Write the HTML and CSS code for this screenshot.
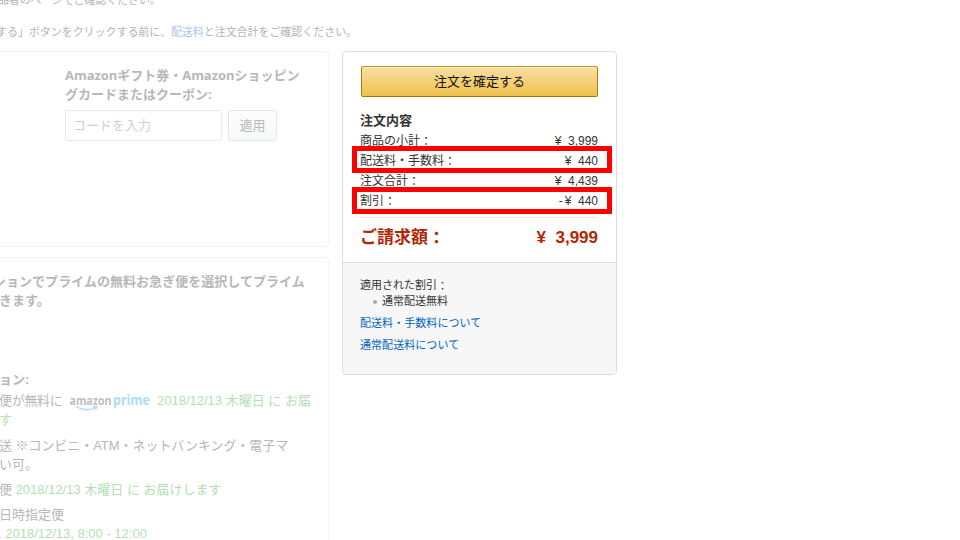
FILE: index.html
```html
<!DOCTYPE html>
<html lang="ja">
<head>
<meta charset="utf-8">
<title>注文の確定</title>
<link rel="stylesheet" href="styles.css">
</head>
<body>
<header class="notice">
  <p class="notice-seller">品者のページでご確認ください。</p>
  <p class="notice-confirm">する」ボタンをクリックする前に、<a>配送料</a>と注文合計をご確認ください。</p>
</header>
<main class="checkout">
  <div class="details">
    <section class="panel coupon">
      <h2><span class="coupon-first">Amazonギフト券・Amazonショッピン</span><br><span class="coupon-second">グカードまたはクーポン:</span></h2>
      <div class="coupon-form">
        <div class="code-input">コードを入力</div>
        <div class="apply">適用</div>
      </div>
    </section>
    <section class="panel shipping">
      <h2><span class="prime-first">ションでプライムの無料お急ぎ便を選択してプライム</span><br><span class="prime-second">きます。</span></h2>
      <h3>ョン:</h3>
      <div class="option prime-option">
        <span class="free">便が無料に</span>
        <svg class="logo" width="82" height="20" viewBox="0 0 82 20">
          <text class="logo-amazon" x="0.5" y="14" textLength="42" lengthAdjust="spacingAndGlyphs">amazon</text>
          <text class="logo-prime" x="44" y="14" textLength="37" lengthAdjust="spacingAndGlyphs">prime</text>
          <path d="M7 15.500 Q17 21.500 27 16.500 M23.500 16 L28 15.500 L26.500 19" fill="none" stroke="#a9e0f6" stroke-width="1.300"/>
        </svg>
        <span class="green delivery">2018/12/13 木曜日 に お届</span>
      </div>
      <div class="option green prime-end">す</div>
      <div class="option konbini">送 ※コンビニ・ATM・ネットバンキング・電子マ</div>
      <div class="option konbini-end">い可。</div>
      <div class="option express">便 <span class="green">2018/12/13 木曜日 に お届けします</span></div>
      <div class="option scheduled">日時指定便</div>
      <div class="option green slot">, 2018/12/13, 8:00 - 12:00</div>
    </section>
  </div>
  <aside class="summary">
    <div class="order">
      <div class="confirm">注文を確定する</div>
      <h2>注文内容</h2>
      <div class="row"><span>商品の小計<i>：</i></span><span class="price">¥&nbsp; 3,999</span></div>
      <div class="row marked"><span>配送料・手数料<i>：</i></span><span class="price">¥&nbsp; 440</span></div>
      <div class="row"><span>注文合計<i>：</i></span><span class="price">¥&nbsp; 4,439</span></div>
      <div class="row marked"><span>割引<i>：</i></span><span class="price"><b>-</b>¥&nbsp; 440</span></div>
      <div class="total"><span>ご請求額<i>：</i></span><span class="price">¥&nbsp; 3,999</span></div>
    </div>
    <div class="info">
      <p>適用された割引<i>：</i></p>
      <ul><li>通常配送無料</li></ul>
      <a>配送料・手数料について</a>
      <a>通常配送料について</a>
    </div>
  </aside>
</main>
</body>
</html>
```

FILE: styles.css
```css
*, *::before, *::after { box-sizing: border-box; margin: 0; padding: 0; }
body {
  width: 960px;
  height: 540px;
  overflow: hidden;
  background: #fff;
  color: #333;
  font: 13px/19px "Liberation Sans", "Noto Sans CJK JP", sans-serif;
  white-space: nowrap;
}
i { position: relative; top: 1px; font-style: normal; }
.notice { height: 51px; font-size: 11px; line-height: 16px; color: #b5b5b5; overflow: hidden; }
.notice-seller { margin: -8px 0 0 -2px; letter-spacing: -0.15px; }
.notice-confirm { margin: 16px 0 0 -4px; letter-spacing: -0.05px; }
.notice a { color: #a8c8ea; }
.checkout { display: flex; align-items: flex-start; gap: 13px; }
.details { display: flex; flex-direction: column; gap: 10px; width: 329px; color: #b8b8b8; }
.panel { border: 1px solid #f3f3f3; border-left: 0; border-radius: 0 4px 4px 0; }
.panel h2 { font-size: 13px; line-height: 19px; }
.coupon { height: 196px; padding: 14px 0 0 65px; }
.coupon h2 { font-family: "Open Sans", "Noto Sans CJK JP", sans-serif; }
.coupon-first { letter-spacing: -0.03px; }
.coupon-form { display: flex; gap: 6px; margin-top: 6px; line-height: 29px; }
.code-input { width: 157px; height: 31px; padding-left: 7px; border: 1px solid #e8e8e8; border-radius: 3px; color: #d0d0d0; }
.apply { width: 49px; height: 31px; text-align: center; border: 1px solid #e6e6e6; border-radius: 3px; background: linear-gradient(#fdfdfd, #f7f8f9); }
.shipping { height: 283px; padding-top: 14px; overflow: hidden; border-bottom: 0; border-bottom-right-radius: 0; }
.shipping h2 { margin-left: -7px; }
.prime-first { letter-spacing: 0.03px; }
.prime-second { margin-left: 6px; }
.shipping h3 { margin: 60px 0 0 -1px; font-size: 13px; line-height: 19px; }
.option { height: 19px; margin-left: -1px; }
.prime-option { display: flex; margin-top: 2px; }
.free { width: 70px; flex: none; letter-spacing: -0.3px; }
.logo { flex: none; width: 82px; margin-right: 6px; }
.logo text { font-family: "Open Sans", sans-serif; font-weight: 700; }
.logo-amazon { font-size: 12px; fill: #bfc0c3; }
.logo-prime { font-size: 14px; fill: #a9e0f6; }
.green { color: #b4dfb4; }
.konbini { margin-top: 7px; letter-spacing: -0.05px; }
.express, .scheduled { margin-top: 6px; }
.slot { margin-left: -2px; }
.summary { width: 275px; height: 324px; border: 1px solid #ddd; border-radius: 4px; overflow: hidden; }
.order { height: 210px; padding: 14px 18px 0 17px; }
.confirm { height: 31px; margin-left: 1px; border: 1px solid; border-color: #c89411 #b07c14 #a37314; border-radius: 2px; background: linear-gradient(#f7dfa5, #f0c14b); box-shadow: inset 0 1px 0 #fbecc8; color: #111; line-height: 29px; text-align: center; }
.order h2 { margin: 14px 0 1px; font-size: 13px; line-height: 19px; }
.row { position: relative; display: flex; justify-content: space-between; font-size: 12px; line-height: 20px; }
.row b { margin-right: 2px; font-weight: 400; }
.marked::after { content: ""; position: absolute; left: -8px; right: -14px; top: -5px; height: 27px; border: 5px solid #f00; }
.marked ~ .marked::after { top: -4px; }
.total { display: flex; justify-content: space-between; margin-top: 6px; padding-top: 9px; border-top: 1px solid #e7e7e7; color: #b12704; font-size: 17px; font-weight: 700; line-height: 22px; }
.info { height: 112px; padding: 14px 17px; border-top: 1px solid #ddd; background: #f7f7f7; font-size: 11px; line-height: 16px; }
.info ul { list-style: none; padding-left: 22px; }
.info li { position: relative; }
.info li::before { content: ""; position: absolute; left: -9px; top: 7px; width: 4px; height: 4px; border-radius: 50%; background: #aaa; }
.info a { display: block; margin-top: 6px; color: #0066c0; letter-spacing: 0.06px; }
```
